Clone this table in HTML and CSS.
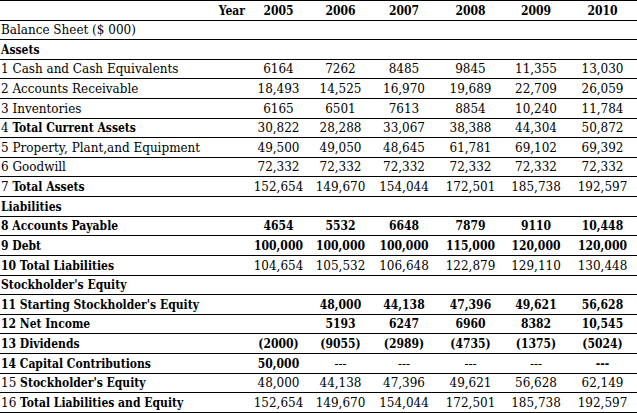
FILE: index.html
```html
<!DOCTYPE html>
<html>
<head>
<meta charset="utf-8">
<link rel="stylesheet" href="styles.css">
</head>
<body>
<table class="sheet">
  <colgroup>
    <col class="c-label">
    <col class="c-a"><col class="c-b"><col class="c-c"><col class="c-d"><col class="c-e"><col class="c-f">
  </colgroup>
  <tr class="b"><td class="year">Year</td><td>2005</td><td>2006</td><td>2007</td><td>2008</td><td>2009</td><td>2010</td></tr>
  <tr><td class="label">Balance Sheet ($ 000)</td><td></td><td></td><td></td><td></td><td></td><td></td></tr>
  <tr class="b"><td class="label">Assets</td><td></td><td></td><td></td><td></td><td></td><td></td></tr>
  <tr><td class="label">1 Cash and Cash Equivalents</td><td>6164</td><td>7262</td><td>8485</td><td>9845</td><td>11,355</td><td>13,030</td></tr>
  <tr><td class="label">2 Accounts Receivable</td><td>18,493</td><td>14,525</td><td>16,970</td><td>19,689</td><td>22,709</td><td>26,059</td></tr>
  <tr><td class="label">3 Inventories</td><td>6165</td><td>6501</td><td>7613</td><td>8854</td><td>10,240</td><td>11,784</td></tr>
  <tr><td class="label">4 <b>Total Current Assets</b></td><td>30,822</td><td>28,288</td><td>33,067</td><td>38,388</td><td>44,304</td><td>50,872</td></tr>
  <tr><td class="label">5 Property, Plant,and Equipment</td><td>49,500</td><td>49,050</td><td>48,645</td><td>61,781</td><td>69,102</td><td>69,392</td></tr>
  <tr><td class="label">6 Goodwill</td><td>72,332</td><td>72,332</td><td>72,332</td><td>72,332</td><td>72,332</td><td>72,332</td></tr>
  <tr><td class="label">7 <b>Total Assets</b></td><td>152,654</td><td>149,670</td><td>154,044</td><td>172,501</td><td>185,738</td><td>192,597</td></tr>
  <tr class="b"><td class="label">Liabilities</td><td></td><td></td><td></td><td></td><td></td><td></td></tr>
  <tr class="b"><td class="label">8 Accounts Payable</td><td>4654</td><td>5532</td><td>6648</td><td>7879</td><td>9110</td><td>10,448</td></tr>
  <tr class="b"><td class="label">9 Debt</td><td>100,000</td><td>100,000</td><td>100,000</td><td>115,000</td><td>120,000</td><td>120,000</td></tr>
  <tr><td class="label"><b>10 Total Liabilities</b></td><td>104,654</td><td>105,532</td><td>106,648</td><td>122,879</td><td>129,110</td><td>130,448</td></tr>
  <tr class="b"><td class="label">Stockholder's Equity</td><td></td><td></td><td></td><td></td><td></td><td></td></tr>
  <tr class="b"><td class="label">11 Starting Stockholder's Equity</td><td></td><td>48,000</td><td>44,138</td><td>47,396</td><td>49,621</td><td>56,628</td></tr>
  <tr class="b"><td class="label">12 Net Income</td><td></td><td>5193</td><td>6247</td><td>6960</td><td>8382</td><td>10,545</td></tr>
  <tr class="b"><td class="label">13 Dividends</td><td>(2000)</td><td>(9055)</td><td>(2989)</td><td>(4735)</td><td>(1375)</td><td>(5024)</td></tr>
  <tr><td class="label"><b>14 Capital Contributions</b></td><td><b>50,000</b></td><td>---</td><td>---</td><td>---</td><td>---</td><td><b>---</b></td></tr>
  <tr><td class="label">15 <b>Stockholder's Equity</b></td><td>48,000</td><td>44,138</td><td>47,396</td><td>49,621</td><td>56,628</td><td>62,149</td></tr>
  <tr><td class="label">16 <b>Total Liabilities and Equity</b></td><td>152,654</td><td>149,670</td><td>154,044</td><td>172,501</td><td>185,738</td><td>192,597</td></tr>
</table>
</body>
</html>
```

FILE: styles.css
```css
html, body {
  margin: 0;
  padding: 0;
  background: #ffffff;
}

.sheet {
  width: 637px;
  height: 413px;
  table-layout: fixed;
  border-collapse: collapse;
  font-family: "DejaVu Serif", serif;
  font-size: 12px;
  color: #000000;
}

.c-label { width: 247px; }
.c-a { width: 63px; }
.c-b { width: 61px; }
.c-c { width: 66px; }
.c-d { width: 67px; }
.c-e { width: 64px; }
.c-f { width: 69px; }

.sheet td {
  border-top: 1px solid #000;
  border-bottom: 1px solid #000;
  padding: 0 0 2px 0;
  line-height: 14px;
  vertical-align: bottom;
  text-align: center;
  white-space: nowrap;
}

.sheet td.label {
  text-align: left;
  padding-left: 1px;
}

.sheet td.year {
  text-align: right;
  padding-right: 2px;
}

.sheet tr.b td,
.sheet b {
  font-family: "DejaVu Serif Condensed", "DejaVu Serif", serif;
  font-weight: bold;
}
```
